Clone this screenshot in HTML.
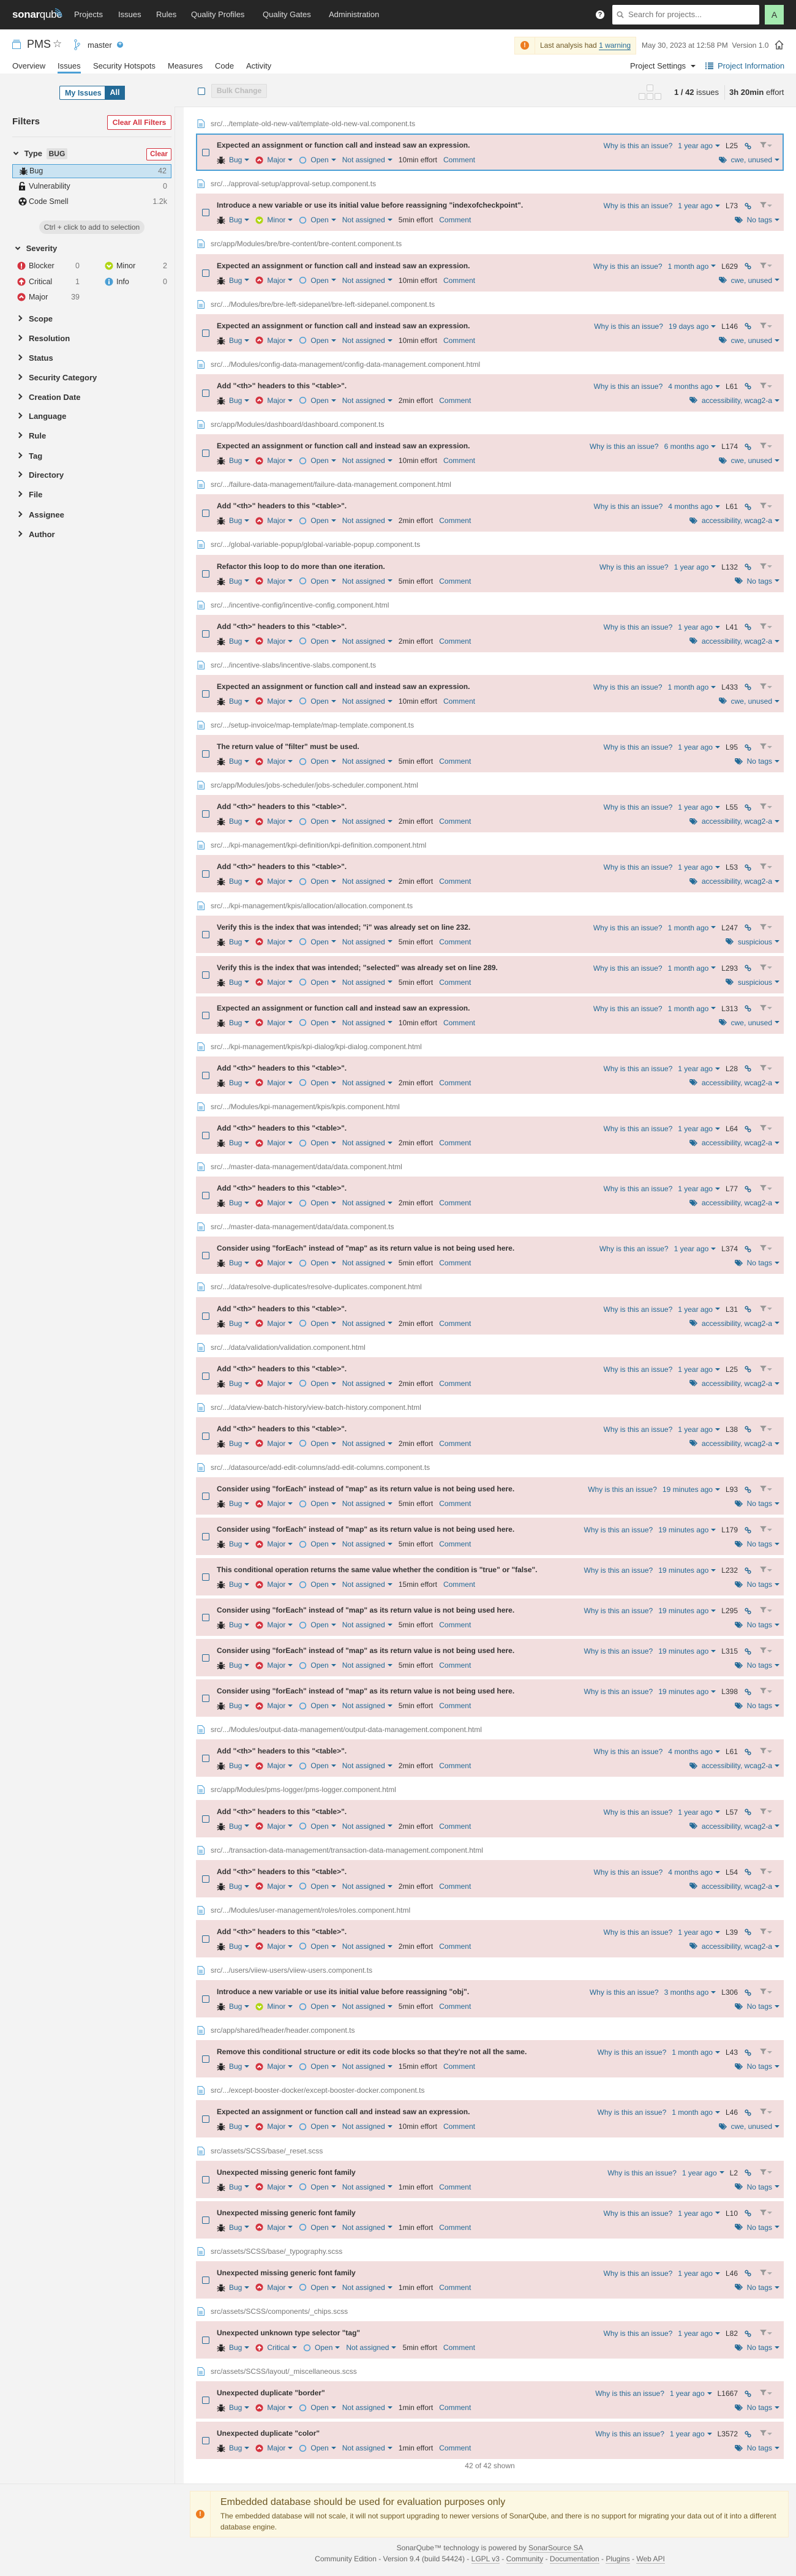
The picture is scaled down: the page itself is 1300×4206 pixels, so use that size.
<!DOCTYPE html>
<html><head><meta charset="utf-8">
<style>
*{box-sizing:border-box}
body{margin:0;width:1300px;height:4206px;position:relative;font-family:"Liberation Sans",Arial,sans-serif;font-size:12px;color:#333;background:#f3f3f3;overflow:hidden}
a{color:#236a97;text-decoration:none}
.abs{position:absolute}
.top{left:0;top:0;width:1300px;height:48px;background:#262626}
.nav a{position:absolute;top:16px;color:#ddd;font-size:13px}
.pbar{left:0;top:48px;width:1300px;height:72px;background:#fff}
.main-w{left:300px;top:175px;width:1000px;height:3880px;background:#fff}
.tbar{left:285px;top:120px;width:1015px;height:55px;background:#f3f3f3;border-bottom:1px solid #e6e6e6}
.side{left:0;top:120px;width:286px;height:3935px;border-right:1px solid #e6e6e6;background:#f3f3f3}
.sh{position:absolute;left:28px;font-weight:bold;font-size:13px;color:#333}
.sh:before{content:"";display:inline-block;width:5px;height:5px;border-right:2px solid #333;border-top:2px solid #333;transform:rotate(45deg);margin-right:12px;position:relative;top:-2px}
.fr{position:absolute;left:20px;width:260px;height:23px;line-height:23px;font-size:12.5px;padding-left:27px}
.fr svg{position:absolute;left:10px;top:4px}
.fr .n{position:absolute;right:7px;color:#777}
.sv{position:absolute;height:20px;line-height:20px;font-size:12.5px;padding-left:27px}
.sv svg{position:absolute;left:8px;top:3px}
.sv .n{position:absolute;right:0;color:#777}
#list{position:absolute;left:320px;top:186px;width:960px}
.fh{height:32.2px;display:flex;align-items:center;color:#777;font-size:12px;padding-left:2px}
.fh svg{margin-right:10px}
.c{height:61px;margin-bottom:5px;background:#f2dede;position:relative}
.c.sel{border:2px solid #4b9fd5}
.cb{position:absolute;left:10px;top:25px;width:12px;height:12px;border:1px solid #236a97;border-radius:2px}
.sel .cb{left:8px;top:23px}
.t{position:absolute;left:34px;top:11px;font-weight:bold;font-size:12px;line-height:16px;white-space:nowrap}
.sel .t{left:32px;top:9px}
.m{position:absolute;left:34px;top:35px;line-height:16px;white-space:nowrap;display:flex;align-items:center}
.sel .m{left:32px;top:33px}
.m svg{margin-right:6px}
.m a,.m span{margin-right:10px}
u{display:inline-block;width:0;height:0;border-left:4px solid transparent;border-right:4px solid transparent;border-top:4px solid #236a97;margin-left:4px;vertical-align:middle;position:relative;top:-1px}
.r1{position:absolute;right:8px;top:12px;line-height:16px;display:flex;align-items:center;white-space:nowrap}
.r2{position:absolute;right:7px;top:35px;line-height:16px;display:flex;align-items:center;white-space:nowrap}
.sel .r1{right:6px;top:10px}.sel .r2{right:5px;top:33px}
.r1 a{margin-right:9px}.r1 span{margin-right:11px}
.r1 .lk{margin-right:14px}
.r2 svg{margin-right:5px}
.fl u{border-top-color:#aaa;margin-left:1px}
</style></head><body>
<svg width="0" height="0" style="position:absolute">
<defs>
<symbol id="bug" viewBox="0 0 14 14"><path d="M5 1.5l1 1.5h2l1-1.5" stroke="#222" fill="none" stroke-width="1.2"/><rect x="4.5" y="3" width="5" height="2.5" fill="#222"/><path d="M4 6h6v4.5a3 3 0 0 1-6 0z" fill="#222"/><path d="M1 5.5l3 1.5M13 5.5l-3 1.5M0.5 9h3.5M13.5 9h-3.5M1 13l3-2M13 13l-3-2" stroke="#222" stroke-width="1.3"/></symbol>
<symbol id="maj" viewBox="0 0 14 14"><circle cx="7" cy="7" r="6.5" fill="#d4333f"/><path d="M3.8 8.6L7 5.4l3.2 3.2" stroke="#fff" stroke-width="2.2" fill="none"/></symbol>
<symbol id="min" viewBox="0 0 14 14"><circle cx="7" cy="7" r="6.5" fill="#b0d513"/><path d="M3.8 5.6L7 8.8l3.2-3.2" stroke="#fff" stroke-width="2.2" fill="none"/></symbol>
<symbol id="crit" viewBox="0 0 14 14"><circle cx="7" cy="7" r="6.5" fill="#d4333f"/><path d="M7 11.5V4.5M3.8 7.6L7 4.4l3.2 3.2" stroke="#fff" stroke-width="2.2" fill="none"/></symbol>
<symbol id="blk" viewBox="0 0 14 14"><circle cx="7" cy="7" r="6.5" fill="#d4333f"/><rect x="6" y="3" width="2" height="5.5" fill="#fff"/><rect x="6" y="9.5" width="2" height="2" fill="#fff"/></symbol>
<symbol id="inf" viewBox="0 0 14 14"><circle cx="7" cy="7" r="6.5" fill="#4b9fd5"/><rect x="6" y="6" width="2" height="5" fill="#fff"/><rect x="6" y="3" width="2" height="2" fill="#fff"/></symbol>
<symbol id="open" viewBox="0 0 14 14"><circle cx="7" cy="7" r="5.3" fill="none" stroke="#4b9fd5" stroke-width="1.6"/></symbol>
<symbol id="lnk" viewBox="0 0 12 12"><circle cx="3.6" cy="3.6" r="2.4" fill="none" stroke="#236a97" stroke-width="1.6"/><circle cx="8.4" cy="8.4" r="2.4" fill="none" stroke="#236a97" stroke-width="1.6"/><path d="M5 5l2 2" stroke="#236a97" stroke-width="1.6"/></symbol>
<symbol id="flt" viewBox="0 0 12 12"><path d="M0 1h12L7.5 6v5L4.5 9.5V6z" fill="#999"/></symbol>
<symbol id="tag" viewBox="0 0 16 12"><path d="M0 1v4l6 6 5-5-6-6H1z" fill="#236a97"/><circle cx="2.5" cy="2.5" r="1" fill="#f2dede"/><path d="M7 0l6 6-5 5" stroke="#236a97" stroke-width="1.5" fill="none"/></symbol>
<symbol id="file" viewBox="0 0 12 14"><path d="M1 .5h7l3.5 3.5v9.5H1z" fill="none" stroke="#4b9fd5"/><path d="M3 7h6M3 9h6M3 11h6" stroke="#4b9fd5"/></symbol>
</defs></svg>

<div class="abs top"></div>
<div class="abs" style="left:20px;top:14px;color:#fff;font-size:17px;letter-spacing:-0.3px"><b>sonar</b>qube</div>
<svg class="abs" style="left:88px;top:12px" width="16" height="22" viewBox="0 0 16 22"><path d="M2 2c6 1 10 6 11 13M2 5c5 1 8 5 8.5 10M2 8c3 1 5.5 3.5 6 7" stroke="#4b9fd5" fill="none" stroke-width="1.3"/></svg>
<div class="nav"><a style="left:121px">Projects</a><a style="left:193px">Issues</a><a style="left:255px">Rules</a><a style="left:312px">Quality Profiles</a><a style="left:429px">Quality Gates</a><a style="left:537px">Administration</a></div>
<div class="abs" style="left:973px;top:17px;width:14px;height:14px;border-radius:7px;background:#fff;color:#262626;font-weight:bold;font-size:11px;text-align:center;line-height:14px">?</div>
<div class="abs" style="left:1000px;top:8px;width:240px;height:32px;background:#fff;border-radius:2px;color:#777;font-size:13px;line-height:32px;padding-left:26px">Search for projects...</div>
<svg class="abs" style="left:1007px;top:18px" width="12" height="12"><circle cx="5" cy="5" r="3.8" stroke="#888" stroke-width="1.5" fill="none"/><path d="M8 8l3 3" stroke="#888" stroke-width="1.8"/></svg>
<div class="abs" style="left:1249px;top:8px;width:31px;height:32px;background:#a5eab0;color:#333;font-size:14px;text-align:center;line-height:32px">A</div>

<div class="abs pbar"></div>
<svg class="abs" style="left:20px;top:65px" width="14" height="15"><rect x="0.5" y="4.5" width="13" height="10" fill="none" stroke="#4b9fd5"/><path d="M1 2.5h12M2 .5h10" stroke="#4b9fd5"/></svg>
<div class="abs" style="left:44px;top:62px;font-size:18px;color:#333">PMS</div>
<div class="abs" style="left:86px;top:62px;font-size:17px;color:#555">☆</div>
<svg class="abs" style="left:121px;top:64px" width="10" height="18"><circle cx="2.5" cy="2.5" r="1.8" fill="none" stroke="#4b9fd5"/><circle cx="2.5" cy="15.5" r="1.8" fill="none" stroke="#4b9fd5"/><circle cx="7.5" cy="8" r="1.8" fill="none" stroke="#4b9fd5"/><path d="M2.5 4.5v9M7.5 10c0 3-5 2-5 4" stroke="#4b9fd5" fill="none"/></svg>
<div class="abs" style="left:143px;top:66px;font-size:13px;color:#333">master</div>
<div class="abs" style="left:191px;top:68px;width:10px;height:10px;border-radius:5px;background:#4b9fd5;color:#fff;font-size:10px;line-height:10px;text-align:center;font-weight:bold">+</div>
<div class="abs" style="left:840px;top:60px;width:199px;height:29px;background:#fcf8e3;border:1px solid #faebcc"></div>
<div class="abs" style="left:873px;top:61px;width:1px;height:27px;background:#faebcc"></div>
<div class="abs" style="left:850px;top:67px;width:14px;height:14px;border-radius:7px;background:#ed7d20;color:#fff;font-weight:bold;font-size:11px;text-align:center;line-height:14px">!</div>
<div class="abs" style="left:882px;top:67px;font-size:12px;color:#6d5723">Last analysis had <a style="color:#236a97;border-bottom:1px solid #236a97">1 warning</a></div>
<div class="abs" style="left:1048px;top:67px;font-size:12px;color:#666">May 30, 2023 at 12:58 PM&nbsp; Version 1.0</div>
<svg class="abs" style="left:1265px;top:65px" width="15" height="16"><path d="M1 8L7.5 1.5 14 8M3 6.5V15h3.5v-4h2v4H12V6.5" fill="none" stroke="#444" stroke-width="1.3"/></svg>
<div class="abs" style="top:100px;left:20px;font-size:13px;color:#333">Overview</div>
<div class="abs" style="top:100px;left:94px;font-size:13px;color:#333">Issues</div>
<div class="abs" style="top:117px;left:94px;width:38px;height:3px;background:#4b9fd5"></div>
<div class="abs" style="top:100px;left:152px;font-size:13px;color:#333">Security Hotspots</div>
<div class="abs" style="top:100px;left:274px;font-size:13px;color:#333">Measures</div>
<div class="abs" style="top:100px;left:351px;font-size:13px;color:#333">Code</div>
<div class="abs" style="top:100px;left:402px;font-size:13px;color:#333">Activity</div>
<div class="abs" style="top:100px;left:1029px;font-size:13px;color:#333">Project Settings <u style="border-top-color:#333"></u></div>
<svg class="abs" style="left:1152px;top:102px" width="13" height="11"><path d="M0 1h2M4 1h9M0 4h2M4 4h9M0 7h2M4 7h9M0 10h2M4 10h9" stroke="#236a97" stroke-width="1.8"/></svg>
<div class="abs" style="top:100px;left:1172px;font-size:13px;color:#236a97">Project Information</div>

<div class="abs side"></div>
<div class="abs tbar"></div>
<div class="abs main-w"></div>

<div class="abs" style="left:97px;top:140px;width:107px;height:23px;border:1px solid #236a97;border-radius:2px;background:#fff"></div>
<div class="abs" style="left:106px;top:145px;font-weight:bold;color:#236a97;font-size:12.5px">My Issues</div>
<div class="abs" style="left:171px;top:140px;width:33px;height:23px;background:#236a97;color:#fff;font-weight:bold;font-size:12.5px;line-height:23px;text-align:center">All</div>
<div class="abs" style="left:20px;top:190px;font-weight:bold;font-size:15px">Filters</div>
<div class="abs" style="left:175px;top:188px;width:105px;height:24px;border:1px solid #d4333f;border-radius:2px;color:#d4333f;font-weight:bold;font-size:12px;line-height:22px;text-align:center;background:#fff">Clear All Filters</div>
<div class="abs" style="left:20px;top:223px;width:260px;height:1px;background:#e1e1e1"></div>
<div class="abs" style="left:20px;top:243px;font-weight:bold;font-size:13px"><span style="display:inline-block;width:6px;height:6px;border-right:2px solid #333;border-bottom:2px solid #333;transform:rotate(45deg);margin-right:10px;position:relative;top:-3px;left:3px"></span> Type <span style="background:#e1e1e1;padding:2px 4px;border-radius:2px;font-size:12px;margin-left:3px">BUG</span></div>
<div class="abs" style="left:239px;top:242px;width:41px;height:20px;border:1px solid #d4333f;border-radius:2px;color:#d4333f;font-weight:bold;font-size:11.5px;line-height:18px;text-align:center;background:#fff">Clear</div>
<div class="fr" style="top:268px;background:#cae3f2;border:1px solid #4b9fd5;line-height:21px"><svg width="15" height="14" style="top:3px"><use href="#bug"/></svg>Bug<span class="n">42</span></div>
<div class="fr" style="top:293px"><svg width="12" height="14"><rect x="1" y="6" width="10" height="8" fill="#222"/><path d="M3 6V3.5a3 3 0 0 1 6 0" fill="none" stroke="#222" stroke-width="1.8"/><rect x="5" y="8.5" width="2" height="3" fill="#fff"/></svg>Vulnerability<span class="n">0</span></div>
<div class="fr" style="top:318px"><svg width="14" height="14"><circle cx="7" cy="7" r="6.5" fill="#222"/><circle cx="4.3" cy="5.5" r="1.8" fill="#fff"/><circle cx="9.7" cy="5.5" r="1.8" fill="#fff"/><circle cx="7" cy="10.5" r="1.8" fill="#fff"/></svg>Code Smell<span class="n">1.2k</span></div>
<div class="abs" style="left:64px;top:360px;width:172px;height:22px;border-radius:11px;background:#e4e4e4;color:#555;font-size:12px;line-height:22px;text-align:center">Ctrl + click to add to selection</div>
<div class="abs" style="left:23px;top:398px;font-weight:bold;font-size:13px"><span style="display:inline-block;width:6px;height:6px;border-right:2px solid #333;border-bottom:2px solid #333;transform:rotate(45deg);margin-right:10px;position:relative;top:-3px;left:3px"></span> Severity</div>
<div class="sv" style="left:20px;top:424px;width:110px"><svg width="14" height="14"><use href="#blk"/></svg>Blocker<span class="n">0</span></div>
<div class="sv" style="left:20px;top:450px;width:110px"><svg width="14" height="14"><use href="#crit"/></svg>Critical<span class="n">1</span></div>
<div class="sv" style="left:20px;top:475px;width:110px"><svg width="14" height="14"><use href="#maj"/></svg>Major<span class="n">39</span></div>
<div class="sv" style="left:163px;top:424px;width:110px"><svg width="14" height="14"><use href="#min"/></svg>Minor<span class="n">2</span></div>
<div class="sv" style="left:163px;top:450px;width:110px"><svg width="14" height="14"><use href="#inf"/></svg>Info<span class="n">0</span></div>
<div class="sh" style="top:513px">Scope</div>
<div class="sh" style="top:545px">Resolution</div>
<div class="sh" style="top:577px">Status</div>
<div class="sh" style="top:609px">Security Category</div>
<div class="sh" style="top:641px">Creation Date</div>
<div class="sh" style="top:672px">Language</div>
<div class="sh" style="top:704px">Rule</div>
<div class="sh" style="top:737px">Tag</div>
<div class="sh" style="top:768px">Directory</div>
<div class="sh" style="top:800px">File</div>
<div class="sh" style="top:833px">Assignee</div>
<div class="sh" style="top:865px">Author</div>

<div class="abs" style="left:323px;top:143px;width:12px;height:12px;border:1px solid #236a97;border-radius:2px;background:#fff"></div>
<div class="abs" style="left:345px;top:137px;width:91px;height:23px;border:1px solid #ddd;border-radius:2px;background:#ebebeb;color:#bbb;font-weight:bold;font-size:12px;line-height:21px;text-align:center">Bulk Change</div>
<div class="abs" style="left:1056px;top:138px;width:11px;height:11px;border:1px solid #ccc;border-radius:2px;background:#f8f8f8"></div>
<div class="abs" style="left:1043px;top:152px;width:11px;height:11px;border:1px solid #ccc;border-radius:2px;background:#f8f8f8"></div>
<div class="abs" style="left:1056px;top:152px;width:11px;height:11px;border:1px solid #ccc;border-radius:2px;background:#f8f8f8"></div>
<div class="abs" style="left:1069px;top:152px;width:11px;height:11px;border:1px solid #ccc;border-radius:2px;background:#f8f8f8"></div>
<div class="abs" style="left:1101px;top:143px;font-size:13px"><b>1 / 42</b> issues</div>
<div class="abs" style="left:1183px;top:139px;width:1px;height:24px;background:#ddd"></div>
<div class="abs" style="left:1191px;top:143px;font-size:13px"><b>3h 20min</b> effort</div>

<div id="list">
<div class="fh"><svg width="12" height="14"><use href="#file"/></svg>src/.../template-old-new-val/template-old-new-val.component.ts</div>
<div class="c sel"><i class="cb"></i><div class="t">Expected an assignment or function call and instead saw an expression.</div><div class="m"><svg width="14" height="14"><use href="#bug"/></svg><a>Bug<u></u></a><svg width="13" height="13"><use href="#maj"/></svg><a>Major<u></u></a><svg width="13" height="13"><use href="#open"/></svg><a>Open<u></u></a><a>Not assigned<u></u></a><span>10min effort</span><a>Comment</a></div><div class="r1"><a>Why is this an issue?</a><a>1 year ago<u></u></a><span>L25</span><svg class="lk" width="11" height="11"><use href="#lnk"/></svg><span class="fl"><svg width="11" height="11"><use href="#flt"/></svg><u></u></span></div><div class="r2"><svg width="15" height="11"><use href="#tag"/></svg><a>cwe, unused<u></u></a></div></div>

<div class="fh"><svg width="12" height="14"><use href="#file"/></svg>src/.../approval-setup/approval-setup.component.ts</div>
<div class="c"><i class="cb"></i><div class="t">Introduce a new variable or use its initial value before reassigning "indexofcheckpoint".</div><div class="m"><svg width="14" height="14"><use href="#bug"/></svg><a>Bug<u></u></a><svg width="13" height="13"><use href="#min"/></svg><a>Minor<u></u></a><svg width="13" height="13"><use href="#open"/></svg><a>Open<u></u></a><a>Not assigned<u></u></a><span>5min effort</span><a>Comment</a></div><div class="r1"><a>Why is this an issue?</a><a>1 year ago<u></u></a><span>L73</span><svg class="lk" width="11" height="11"><use href="#lnk"/></svg><span class="fl"><svg width="11" height="11"><use href="#flt"/></svg><u></u></span></div><div class="r2"><svg width="15" height="11"><use href="#tag"/></svg><a>No tags<u></u></a></div></div>

<div class="fh"><svg width="12" height="14"><use href="#file"/></svg>src/app/Modules/bre/bre-content/bre-content.component.ts</div>
<div class="c"><i class="cb"></i><div class="t">Expected an assignment or function call and instead saw an expression.</div><div class="m"><svg width="14" height="14"><use href="#bug"/></svg><a>Bug<u></u></a><svg width="13" height="13"><use href="#maj"/></svg><a>Major<u></u></a><svg width="13" height="13"><use href="#open"/></svg><a>Open<u></u></a><a>Not assigned<u></u></a><span>10min effort</span><a>Comment</a></div><div class="r1"><a>Why is this an issue?</a><a>1 month ago<u></u></a><span>L629</span><svg class="lk" width="11" height="11"><use href="#lnk"/></svg><span class="fl"><svg width="11" height="11"><use href="#flt"/></svg><u></u></span></div><div class="r2"><svg width="15" height="11"><use href="#tag"/></svg><a>cwe, unused<u></u></a></div></div>

<div class="fh"><svg width="12" height="14"><use href="#file"/></svg>src/.../Modules/bre/bre-left-sidepanel/bre-left-sidepanel.component.ts</div>
<div class="c"><i class="cb"></i><div class="t">Expected an assignment or function call and instead saw an expression.</div><div class="m"><svg width="14" height="14"><use href="#bug"/></svg><a>Bug<u></u></a><svg width="13" height="13"><use href="#maj"/></svg><a>Major<u></u></a><svg width="13" height="13"><use href="#open"/></svg><a>Open<u></u></a><a>Not assigned<u></u></a><span>10min effort</span><a>Comment</a></div><div class="r1"><a>Why is this an issue?</a><a>19 days ago<u></u></a><span>L146</span><svg class="lk" width="11" height="11"><use href="#lnk"/></svg><span class="fl"><svg width="11" height="11"><use href="#flt"/></svg><u></u></span></div><div class="r2"><svg width="15" height="11"><use href="#tag"/></svg><a>cwe, unused<u></u></a></div></div>

<div class="fh"><svg width="12" height="14"><use href="#file"/></svg>src/.../Modules/config-data-management/config-data-management.component.html</div>
<div class="c"><i class="cb"></i><div class="t">Add "&lt;th&gt;" headers to this "&lt;table&gt;".</div><div class="m"><svg width="14" height="14"><use href="#bug"/></svg><a>Bug<u></u></a><svg width="13" height="13"><use href="#maj"/></svg><a>Major<u></u></a><svg width="13" height="13"><use href="#open"/></svg><a>Open<u></u></a><a>Not assigned<u></u></a><span>2min effort</span><a>Comment</a></div><div class="r1"><a>Why is this an issue?</a><a>4 months ago<u></u></a><span>L61</span><svg class="lk" width="11" height="11"><use href="#lnk"/></svg><span class="fl"><svg width="11" height="11"><use href="#flt"/></svg><u></u></span></div><div class="r2"><svg width="15" height="11"><use href="#tag"/></svg><a>accessibility, wcag2-a<u></u></a></div></div>

<div class="fh"><svg width="12" height="14"><use href="#file"/></svg>src/app/Modules/dashboard/dashboard.component.ts</div>
<div class="c"><i class="cb"></i><div class="t">Expected an assignment or function call and instead saw an expression.</div><div class="m"><svg width="14" height="14"><use href="#bug"/></svg><a>Bug<u></u></a><svg width="13" height="13"><use href="#maj"/></svg><a>Major<u></u></a><svg width="13" height="13"><use href="#open"/></svg><a>Open<u></u></a><a>Not assigned<u></u></a><span>10min effort</span><a>Comment</a></div><div class="r1"><a>Why is this an issue?</a><a>6 months ago<u></u></a><span>L174</span><svg class="lk" width="11" height="11"><use href="#lnk"/></svg><span class="fl"><svg width="11" height="11"><use href="#flt"/></svg><u></u></span></div><div class="r2"><svg width="15" height="11"><use href="#tag"/></svg><a>cwe, unused<u></u></a></div></div>

<div class="fh"><svg width="12" height="14"><use href="#file"/></svg>src/.../failure-data-management/failure-data-management.component.html</div>
<div class="c"><i class="cb"></i><div class="t">Add "&lt;th&gt;" headers to this "&lt;table&gt;".</div><div class="m"><svg width="14" height="14"><use href="#bug"/></svg><a>Bug<u></u></a><svg width="13" height="13"><use href="#maj"/></svg><a>Major<u></u></a><svg width="13" height="13"><use href="#open"/></svg><a>Open<u></u></a><a>Not assigned<u></u></a><span>2min effort</span><a>Comment</a></div><div class="r1"><a>Why is this an issue?</a><a>4 months ago<u></u></a><span>L61</span><svg class="lk" width="11" height="11"><use href="#lnk"/></svg><span class="fl"><svg width="11" height="11"><use href="#flt"/></svg><u></u></span></div><div class="r2"><svg width="15" height="11"><use href="#tag"/></svg><a>accessibility, wcag2-a<u></u></a></div></div>

<div class="fh"><svg width="12" height="14"><use href="#file"/></svg>src/.../global-variable-popup/global-variable-popup.component.ts</div>
<div class="c"><i class="cb"></i><div class="t">Refactor this loop to do more than one iteration.</div><div class="m"><svg width="14" height="14"><use href="#bug"/></svg><a>Bug<u></u></a><svg width="13" height="13"><use href="#maj"/></svg><a>Major<u></u></a><svg width="13" height="13"><use href="#open"/></svg><a>Open<u></u></a><a>Not assigned<u></u></a><span>5min effort</span><a>Comment</a></div><div class="r1"><a>Why is this an issue?</a><a>1 year ago<u></u></a><span>L132</span><svg class="lk" width="11" height="11"><use href="#lnk"/></svg><span class="fl"><svg width="11" height="11"><use href="#flt"/></svg><u></u></span></div><div class="r2"><svg width="15" height="11"><use href="#tag"/></svg><a>No tags<u></u></a></div></div>

<div class="fh"><svg width="12" height="14"><use href="#file"/></svg>src/.../incentive-config/incentive-config.component.html</div>
<div class="c"><i class="cb"></i><div class="t">Add "&lt;th&gt;" headers to this "&lt;table&gt;".</div><div class="m"><svg width="14" height="14"><use href="#bug"/></svg><a>Bug<u></u></a><svg width="13" height="13"><use href="#maj"/></svg><a>Major<u></u></a><svg width="13" height="13"><use href="#open"/></svg><a>Open<u></u></a><a>Not assigned<u></u></a><span>2min effort</span><a>Comment</a></div><div class="r1"><a>Why is this an issue?</a><a>1 year ago<u></u></a><span>L41</span><svg class="lk" width="11" height="11"><use href="#lnk"/></svg><span class="fl"><svg width="11" height="11"><use href="#flt"/></svg><u></u></span></div><div class="r2"><svg width="15" height="11"><use href="#tag"/></svg><a>accessibility, wcag2-a<u></u></a></div></div>

<div class="fh"><svg width="12" height="14"><use href="#file"/></svg>src/.../incentive-slabs/incentive-slabs.component.ts</div>
<div class="c"><i class="cb"></i><div class="t">Expected an assignment or function call and instead saw an expression.</div><div class="m"><svg width="14" height="14"><use href="#bug"/></svg><a>Bug<u></u></a><svg width="13" height="13"><use href="#maj"/></svg><a>Major<u></u></a><svg width="13" height="13"><use href="#open"/></svg><a>Open<u></u></a><a>Not assigned<u></u></a><span>10min effort</span><a>Comment</a></div><div class="r1"><a>Why is this an issue?</a><a>1 month ago<u></u></a><span>L433</span><svg class="lk" width="11" height="11"><use href="#lnk"/></svg><span class="fl"><svg width="11" height="11"><use href="#flt"/></svg><u></u></span></div><div class="r2"><svg width="15" height="11"><use href="#tag"/></svg><a>cwe, unused<u></u></a></div></div>

<div class="fh"><svg width="12" height="14"><use href="#file"/></svg>src/.../setup-invoice/map-template/map-template.component.ts</div>
<div class="c"><i class="cb"></i><div class="t">The return value of "filter" must be used.</div><div class="m"><svg width="14" height="14"><use href="#bug"/></svg><a>Bug<u></u></a><svg width="13" height="13"><use href="#maj"/></svg><a>Major<u></u></a><svg width="13" height="13"><use href="#open"/></svg><a>Open<u></u></a><a>Not assigned<u></u></a><span>5min effort</span><a>Comment</a></div><div class="r1"><a>Why is this an issue?</a><a>1 year ago<u></u></a><span>L95</span><svg class="lk" width="11" height="11"><use href="#lnk"/></svg><span class="fl"><svg width="11" height="11"><use href="#flt"/></svg><u></u></span></div><div class="r2"><svg width="15" height="11"><use href="#tag"/></svg><a>No tags<u></u></a></div></div>

<div class="fh"><svg width="12" height="14"><use href="#file"/></svg>src/app/Modules/jobs-scheduler/jobs-scheduler.component.html</div>
<div class="c"><i class="cb"></i><div class="t">Add "&lt;th&gt;" headers to this "&lt;table&gt;".</div><div class="m"><svg width="14" height="14"><use href="#bug"/></svg><a>Bug<u></u></a><svg width="13" height="13"><use href="#maj"/></svg><a>Major<u></u></a><svg width="13" height="13"><use href="#open"/></svg><a>Open<u></u></a><a>Not assigned<u></u></a><span>2min effort</span><a>Comment</a></div><div class="r1"><a>Why is this an issue?</a><a>1 year ago<u></u></a><span>L55</span><svg class="lk" width="11" height="11"><use href="#lnk"/></svg><span class="fl"><svg width="11" height="11"><use href="#flt"/></svg><u></u></span></div><div class="r2"><svg width="15" height="11"><use href="#tag"/></svg><a>accessibility, wcag2-a<u></u></a></div></div>

<div class="fh"><svg width="12" height="14"><use href="#file"/></svg>src/.../kpi-management/kpi-definition/kpi-definition.component.html</div>
<div class="c"><i class="cb"></i><div class="t">Add "&lt;th&gt;" headers to this "&lt;table&gt;".</div><div class="m"><svg width="14" height="14"><use href="#bug"/></svg><a>Bug<u></u></a><svg width="13" height="13"><use href="#maj"/></svg><a>Major<u></u></a><svg width="13" height="13"><use href="#open"/></svg><a>Open<u></u></a><a>Not assigned<u></u></a><span>2min effort</span><a>Comment</a></div><div class="r1"><a>Why is this an issue?</a><a>1 year ago<u></u></a><span>L53</span><svg class="lk" width="11" height="11"><use href="#lnk"/></svg><span class="fl"><svg width="11" height="11"><use href="#flt"/></svg><u></u></span></div><div class="r2"><svg width="15" height="11"><use href="#tag"/></svg><a>accessibility, wcag2-a<u></u></a></div></div>

<div class="fh"><svg width="12" height="14"><use href="#file"/></svg>src/.../kpi-management/kpis/allocation/allocation.component.ts</div>
<div class="c"><i class="cb"></i><div class="t">Verify this is the index that was intended; "i" was already set on line 232.</div><div class="m"><svg width="14" height="14"><use href="#bug"/></svg><a>Bug<u></u></a><svg width="13" height="13"><use href="#maj"/></svg><a>Major<u></u></a><svg width="13" height="13"><use href="#open"/></svg><a>Open<u></u></a><a>Not assigned<u></u></a><span>5min effort</span><a>Comment</a></div><div class="r1"><a>Why is this an issue?</a><a>1 month ago<u></u></a><span>L247</span><svg class="lk" width="11" height="11"><use href="#lnk"/></svg><span class="fl"><svg width="11" height="11"><use href="#flt"/></svg><u></u></span></div><div class="r2"><svg width="15" height="11"><use href="#tag"/></svg><a>suspicious<u></u></a></div></div>
<div class="c"><i class="cb"></i><div class="t">Verify this is the index that was intended; "selected" was already set on line 289.</div><div class="m"><svg width="14" height="14"><use href="#bug"/></svg><a>Bug<u></u></a><svg width="13" height="13"><use href="#maj"/></svg><a>Major<u></u></a><svg width="13" height="13"><use href="#open"/></svg><a>Open<u></u></a><a>Not assigned<u></u></a><span>5min effort</span><a>Comment</a></div><div class="r1"><a>Why is this an issue?</a><a>1 month ago<u></u></a><span>L293</span><svg class="lk" width="11" height="11"><use href="#lnk"/></svg><span class="fl"><svg width="11" height="11"><use href="#flt"/></svg><u></u></span></div><div class="r2"><svg width="15" height="11"><use href="#tag"/></svg><a>suspicious<u></u></a></div></div>
<div class="c"><i class="cb"></i><div class="t">Expected an assignment or function call and instead saw an expression.</div><div class="m"><svg width="14" height="14"><use href="#bug"/></svg><a>Bug<u></u></a><svg width="13" height="13"><use href="#maj"/></svg><a>Major<u></u></a><svg width="13" height="13"><use href="#open"/></svg><a>Open<u></u></a><a>Not assigned<u></u></a><span>10min effort</span><a>Comment</a></div><div class="r1"><a>Why is this an issue?</a><a>1 month ago<u></u></a><span>L313</span><svg class="lk" width="11" height="11"><use href="#lnk"/></svg><span class="fl"><svg width="11" height="11"><use href="#flt"/></svg><u></u></span></div><div class="r2"><svg width="15" height="11"><use href="#tag"/></svg><a>cwe, unused<u></u></a></div></div>

<div class="fh"><svg width="12" height="14"><use href="#file"/></svg>src/.../kpi-management/kpis/kpi-dialog/kpi-dialog.component.html</div>
<div class="c"><i class="cb"></i><div class="t">Add "&lt;th&gt;" headers to this "&lt;table&gt;".</div><div class="m"><svg width="14" height="14"><use href="#bug"/></svg><a>Bug<u></u></a><svg width="13" height="13"><use href="#maj"/></svg><a>Major<u></u></a><svg width="13" height="13"><use href="#open"/></svg><a>Open<u></u></a><a>Not assigned<u></u></a><span>2min effort</span><a>Comment</a></div><div class="r1"><a>Why is this an issue?</a><a>1 year ago<u></u></a><span>L28</span><svg class="lk" width="11" height="11"><use href="#lnk"/></svg><span class="fl"><svg width="11" height="11"><use href="#flt"/></svg><u></u></span></div><div class="r2"><svg width="15" height="11"><use href="#tag"/></svg><a>accessibility, wcag2-a<u></u></a></div></div>

<div class="fh"><svg width="12" height="14"><use href="#file"/></svg>src/.../Modules/kpi-management/kpis/kpis.component.html</div>
<div class="c"><i class="cb"></i><div class="t">Add "&lt;th&gt;" headers to this "&lt;table&gt;".</div><div class="m"><svg width="14" height="14"><use href="#bug"/></svg><a>Bug<u></u></a><svg width="13" height="13"><use href="#maj"/></svg><a>Major<u></u></a><svg width="13" height="13"><use href="#open"/></svg><a>Open<u></u></a><a>Not assigned<u></u></a><span>2min effort</span><a>Comment</a></div><div class="r1"><a>Why is this an issue?</a><a>1 year ago<u></u></a><span>L64</span><svg class="lk" width="11" height="11"><use href="#lnk"/></svg><span class="fl"><svg width="11" height="11"><use href="#flt"/></svg><u></u></span></div><div class="r2"><svg width="15" height="11"><use href="#tag"/></svg><a>accessibility, wcag2-a<u></u></a></div></div>

<div class="fh"><svg width="12" height="14"><use href="#file"/></svg>src/.../master-data-management/data/data.component.html</div>
<div class="c"><i class="cb"></i><div class="t">Add "&lt;th&gt;" headers to this "&lt;table&gt;".</div><div class="m"><svg width="14" height="14"><use href="#bug"/></svg><a>Bug<u></u></a><svg width="13" height="13"><use href="#maj"/></svg><a>Major<u></u></a><svg width="13" height="13"><use href="#open"/></svg><a>Open<u></u></a><a>Not assigned<u></u></a><span>2min effort</span><a>Comment</a></div><div class="r1"><a>Why is this an issue?</a><a>1 year ago<u></u></a><span>L77</span><svg class="lk" width="11" height="11"><use href="#lnk"/></svg><span class="fl"><svg width="11" height="11"><use href="#flt"/></svg><u></u></span></div><div class="r2"><svg width="15" height="11"><use href="#tag"/></svg><a>accessibility, wcag2-a<u></u></a></div></div>

<div class="fh"><svg width="12" height="14"><use href="#file"/></svg>src/.../master-data-management/data/data.component.ts</div>
<div class="c"><i class="cb"></i><div class="t">Consider using "forEach" instead of "map" as its return value is not being used here.</div><div class="m"><svg width="14" height="14"><use href="#bug"/></svg><a>Bug<u></u></a><svg width="13" height="13"><use href="#maj"/></svg><a>Major<u></u></a><svg width="13" height="13"><use href="#open"/></svg><a>Open<u></u></a><a>Not assigned<u></u></a><span>5min effort</span><a>Comment</a></div><div class="r1"><a>Why is this an issue?</a><a>1 year ago<u></u></a><span>L374</span><svg class="lk" width="11" height="11"><use href="#lnk"/></svg><span class="fl"><svg width="11" height="11"><use href="#flt"/></svg><u></u></span></div><div class="r2"><svg width="15" height="11"><use href="#tag"/></svg><a>No tags<u></u></a></div></div>

<div class="fh"><svg width="12" height="14"><use href="#file"/></svg>src/.../data/resolve-duplicates/resolve-duplicates.component.html</div>
<div class="c"><i class="cb"></i><div class="t">Add "&lt;th&gt;" headers to this "&lt;table&gt;".</div><div class="m"><svg width="14" height="14"><use href="#bug"/></svg><a>Bug<u></u></a><svg width="13" height="13"><use href="#maj"/></svg><a>Major<u></u></a><svg width="13" height="13"><use href="#open"/></svg><a>Open<u></u></a><a>Not assigned<u></u></a><span>2min effort</span><a>Comment</a></div><div class="r1"><a>Why is this an issue?</a><a>1 year ago<u></u></a><span>L31</span><svg class="lk" width="11" height="11"><use href="#lnk"/></svg><span class="fl"><svg width="11" height="11"><use href="#flt"/></svg><u></u></span></div><div class="r2"><svg width="15" height="11"><use href="#tag"/></svg><a>accessibility, wcag2-a<u></u></a></div></div>

<div class="fh"><svg width="12" height="14"><use href="#file"/></svg>src/.../data/validation/validation.component.html</div>
<div class="c"><i class="cb"></i><div class="t">Add "&lt;th&gt;" headers to this "&lt;table&gt;".</div><div class="m"><svg width="14" height="14"><use href="#bug"/></svg><a>Bug<u></u></a><svg width="13" height="13"><use href="#maj"/></svg><a>Major<u></u></a><svg width="13" height="13"><use href="#open"/></svg><a>Open<u></u></a><a>Not assigned<u></u></a><span>2min effort</span><a>Comment</a></div><div class="r1"><a>Why is this an issue?</a><a>1 year ago<u></u></a><span>L25</span><svg class="lk" width="11" height="11"><use href="#lnk"/></svg><span class="fl"><svg width="11" height="11"><use href="#flt"/></svg><u></u></span></div><div class="r2"><svg width="15" height="11"><use href="#tag"/></svg><a>accessibility, wcag2-a<u></u></a></div></div>

<div class="fh"><svg width="12" height="14"><use href="#file"/></svg>src/.../data/view-batch-history/view-batch-history.component.html</div>
<div class="c"><i class="cb"></i><div class="t">Add "&lt;th&gt;" headers to this "&lt;table&gt;".</div><div class="m"><svg width="14" height="14"><use href="#bug"/></svg><a>Bug<u></u></a><svg width="13" height="13"><use href="#maj"/></svg><a>Major<u></u></a><svg width="13" height="13"><use href="#open"/></svg><a>Open<u></u></a><a>Not assigned<u></u></a><span>2min effort</span><a>Comment</a></div><div class="r1"><a>Why is this an issue?</a><a>1 year ago<u></u></a><span>L38</span><svg class="lk" width="11" height="11"><use href="#lnk"/></svg><span class="fl"><svg width="11" height="11"><use href="#flt"/></svg><u></u></span></div><div class="r2"><svg width="15" height="11"><use href="#tag"/></svg><a>accessibility, wcag2-a<u></u></a></div></div>

<div class="fh"><svg width="12" height="14"><use href="#file"/></svg>src/.../datasource/add-edit-columns/add-edit-columns.component.ts</div>
<div class="c"><i class="cb"></i><div class="t">Consider using "forEach" instead of "map" as its return value is not being used here.</div><div class="m"><svg width="14" height="14"><use href="#bug"/></svg><a>Bug<u></u></a><svg width="13" height="13"><use href="#maj"/></svg><a>Major<u></u></a><svg width="13" height="13"><use href="#open"/></svg><a>Open<u></u></a><a>Not assigned<u></u></a><span>5min effort</span><a>Comment</a></div><div class="r1"><a>Why is this an issue?</a><a>19 minutes ago<u></u></a><span>L93</span><svg class="lk" width="11" height="11"><use href="#lnk"/></svg><span class="fl"><svg width="11" height="11"><use href="#flt"/></svg><u></u></span></div><div class="r2"><svg width="15" height="11"><use href="#tag"/></svg><a>No tags<u></u></a></div></div>
<div class="c"><i class="cb"></i><div class="t">Consider using "forEach" instead of "map" as its return value is not being used here.</div><div class="m"><svg width="14" height="14"><use href="#bug"/></svg><a>Bug<u></u></a><svg width="13" height="13"><use href="#maj"/></svg><a>Major<u></u></a><svg width="13" height="13"><use href="#open"/></svg><a>Open<u></u></a><a>Not assigned<u></u></a><span>5min effort</span><a>Comment</a></div><div class="r1"><a>Why is this an issue?</a><a>19 minutes ago<u></u></a><span>L179</span><svg class="lk" width="11" height="11"><use href="#lnk"/></svg><span class="fl"><svg width="11" height="11"><use href="#flt"/></svg><u></u></span></div><div class="r2"><svg width="15" height="11"><use href="#tag"/></svg><a>No tags<u></u></a></div></div>
<div class="c"><i class="cb"></i><div class="t">This conditional operation returns the same value whether the condition is "true" or "false".</div><div class="m"><svg width="14" height="14"><use href="#bug"/></svg><a>Bug<u></u></a><svg width="13" height="13"><use href="#maj"/></svg><a>Major<u></u></a><svg width="13" height="13"><use href="#open"/></svg><a>Open<u></u></a><a>Not assigned<u></u></a><span>15min effort</span><a>Comment</a></div><div class="r1"><a>Why is this an issue?</a><a>19 minutes ago<u></u></a><span>L232</span><svg class="lk" width="11" height="11"><use href="#lnk"/></svg><span class="fl"><svg width="11" height="11"><use href="#flt"/></svg><u></u></span></div><div class="r2"><svg width="15" height="11"><use href="#tag"/></svg><a>No tags<u></u></a></div></div>
<div class="c"><i class="cb"></i><div class="t">Consider using "forEach" instead of "map" as its return value is not being used here.</div><div class="m"><svg width="14" height="14"><use href="#bug"/></svg><a>Bug<u></u></a><svg width="13" height="13"><use href="#maj"/></svg><a>Major<u></u></a><svg width="13" height="13"><use href="#open"/></svg><a>Open<u></u></a><a>Not assigned<u></u></a><span>5min effort</span><a>Comment</a></div><div class="r1"><a>Why is this an issue?</a><a>19 minutes ago<u></u></a><span>L295</span><svg class="lk" width="11" height="11"><use href="#lnk"/></svg><span class="fl"><svg width="11" height="11"><use href="#flt"/></svg><u></u></span></div><div class="r2"><svg width="15" height="11"><use href="#tag"/></svg><a>No tags<u></u></a></div></div>
<div class="c"><i class="cb"></i><div class="t">Consider using "forEach" instead of "map" as its return value is not being used here.</div><div class="m"><svg width="14" height="14"><use href="#bug"/></svg><a>Bug<u></u></a><svg width="13" height="13"><use href="#maj"/></svg><a>Major<u></u></a><svg width="13" height="13"><use href="#open"/></svg><a>Open<u></u></a><a>Not assigned<u></u></a><span>5min effort</span><a>Comment</a></div><div class="r1"><a>Why is this an issue?</a><a>19 minutes ago<u></u></a><span>L315</span><svg class="lk" width="11" height="11"><use href="#lnk"/></svg><span class="fl"><svg width="11" height="11"><use href="#flt"/></svg><u></u></span></div><div class="r2"><svg width="15" height="11"><use href="#tag"/></svg><a>No tags<u></u></a></div></div>
<div class="c"><i class="cb"></i><div class="t">Consider using "forEach" instead of "map" as its return value is not being used here.</div><div class="m"><svg width="14" height="14"><use href="#bug"/></svg><a>Bug<u></u></a><svg width="13" height="13"><use href="#maj"/></svg><a>Major<u></u></a><svg width="13" height="13"><use href="#open"/></svg><a>Open<u></u></a><a>Not assigned<u></u></a><span>5min effort</span><a>Comment</a></div><div class="r1"><a>Why is this an issue?</a><a>19 minutes ago<u></u></a><span>L398</span><svg class="lk" width="11" height="11"><use href="#lnk"/></svg><span class="fl"><svg width="11" height="11"><use href="#flt"/></svg><u></u></span></div><div class="r2"><svg width="15" height="11"><use href="#tag"/></svg><a>No tags<u></u></a></div></div>

<div class="fh"><svg width="12" height="14"><use href="#file"/></svg>src/.../Modules/output-data-management/output-data-management.component.html</div>
<div class="c"><i class="cb"></i><div class="t">Add "&lt;th&gt;" headers to this "&lt;table&gt;".</div><div class="m"><svg width="14" height="14"><use href="#bug"/></svg><a>Bug<u></u></a><svg width="13" height="13"><use href="#maj"/></svg><a>Major<u></u></a><svg width="13" height="13"><use href="#open"/></svg><a>Open<u></u></a><a>Not assigned<u></u></a><span>2min effort</span><a>Comment</a></div><div class="r1"><a>Why is this an issue?</a><a>4 months ago<u></u></a><span>L61</span><svg class="lk" width="11" height="11"><use href="#lnk"/></svg><span class="fl"><svg width="11" height="11"><use href="#flt"/></svg><u></u></span></div><div class="r2"><svg width="15" height="11"><use href="#tag"/></svg><a>accessibility, wcag2-a<u></u></a></div></div>

<div class="fh"><svg width="12" height="14"><use href="#file"/></svg>src/app/Modules/pms-logger/pms-logger.component.html</div>
<div class="c"><i class="cb"></i><div class="t">Add "&lt;th&gt;" headers to this "&lt;table&gt;".</div><div class="m"><svg width="14" height="14"><use href="#bug"/></svg><a>Bug<u></u></a><svg width="13" height="13"><use href="#maj"/></svg><a>Major<u></u></a><svg width="13" height="13"><use href="#open"/></svg><a>Open<u></u></a><a>Not assigned<u></u></a><span>2min effort</span><a>Comment</a></div><div class="r1"><a>Why is this an issue?</a><a>1 year ago<u></u></a><span>L57</span><svg class="lk" width="11" height="11"><use href="#lnk"/></svg><span class="fl"><svg width="11" height="11"><use href="#flt"/></svg><u></u></span></div><div class="r2"><svg width="15" height="11"><use href="#tag"/></svg><a>accessibility, wcag2-a<u></u></a></div></div>

<div class="fh"><svg width="12" height="14"><use href="#file"/></svg>src/.../transaction-data-management/transaction-data-management.component.html</div>
<div class="c"><i class="cb"></i><div class="t">Add "&lt;th&gt;" headers to this "&lt;table&gt;".</div><div class="m"><svg width="14" height="14"><use href="#bug"/></svg><a>Bug<u></u></a><svg width="13" height="13"><use href="#maj"/></svg><a>Major<u></u></a><svg width="13" height="13"><use href="#open"/></svg><a>Open<u></u></a><a>Not assigned<u></u></a><span>2min effort</span><a>Comment</a></div><div class="r1"><a>Why is this an issue?</a><a>4 months ago<u></u></a><span>L54</span><svg class="lk" width="11" height="11"><use href="#lnk"/></svg><span class="fl"><svg width="11" height="11"><use href="#flt"/></svg><u></u></span></div><div class="r2"><svg width="15" height="11"><use href="#tag"/></svg><a>accessibility, wcag2-a<u></u></a></div></div>

<div class="fh"><svg width="12" height="14"><use href="#file"/></svg>src/.../Modules/user-management/roles/roles.component.html</div>
<div class="c"><i class="cb"></i><div class="t">Add "&lt;th&gt;" headers to this "&lt;table&gt;".</div><div class="m"><svg width="14" height="14"><use href="#bug"/></svg><a>Bug<u></u></a><svg width="13" height="13"><use href="#maj"/></svg><a>Major<u></u></a><svg width="13" height="13"><use href="#open"/></svg><a>Open<u></u></a><a>Not assigned<u></u></a><span>2min effort</span><a>Comment</a></div><div class="r1"><a>Why is this an issue?</a><a>1 year ago<u></u></a><span>L39</span><svg class="lk" width="11" height="11"><use href="#lnk"/></svg><span class="fl"><svg width="11" height="11"><use href="#flt"/></svg><u></u></span></div><div class="r2"><svg width="15" height="11"><use href="#tag"/></svg><a>accessibility, wcag2-a<u></u></a></div></div>

<div class="fh"><svg width="12" height="14"><use href="#file"/></svg>src/.../users/viiew-users/viiew-users.component.ts</div>
<div class="c"><i class="cb"></i><div class="t">Introduce a new variable or use its initial value before reassigning "obj".</div><div class="m"><svg width="14" height="14"><use href="#bug"/></svg><a>Bug<u></u></a><svg width="13" height="13"><use href="#min"/></svg><a>Minor<u></u></a><svg width="13" height="13"><use href="#open"/></svg><a>Open<u></u></a><a>Not assigned<u></u></a><span>5min effort</span><a>Comment</a></div><div class="r1"><a>Why is this an issue?</a><a>3 months ago<u></u></a><span>L306</span><svg class="lk" width="11" height="11"><use href="#lnk"/></svg><span class="fl"><svg width="11" height="11"><use href="#flt"/></svg><u></u></span></div><div class="r2"><svg width="15" height="11"><use href="#tag"/></svg><a>No tags<u></u></a></div></div>

<div class="fh"><svg width="12" height="14"><use href="#file"/></svg>src/app/shared/header/header.component.ts</div>
<div class="c"><i class="cb"></i><div class="t">Remove this conditional structure or edit its code blocks so that they're not all the same.</div><div class="m"><svg width="14" height="14"><use href="#bug"/></svg><a>Bug<u></u></a><svg width="13" height="13"><use href="#maj"/></svg><a>Major<u></u></a><svg width="13" height="13"><use href="#open"/></svg><a>Open<u></u></a><a>Not assigned<u></u></a><span>15min effort</span><a>Comment</a></div><div class="r1"><a>Why is this an issue?</a><a>1 month ago<u></u></a><span>L43</span><svg class="lk" width="11" height="11"><use href="#lnk"/></svg><span class="fl"><svg width="11" height="11"><use href="#flt"/></svg><u></u></span></div><div class="r2"><svg width="15" height="11"><use href="#tag"/></svg><a>No tags<u></u></a></div></div>

<div class="fh"><svg width="12" height="14"><use href="#file"/></svg>src/.../except-booster-docker/except-booster-docker.component.ts</div>
<div class="c"><i class="cb"></i><div class="t">Expected an assignment or function call and instead saw an expression.</div><div class="m"><svg width="14" height="14"><use href="#bug"/></svg><a>Bug<u></u></a><svg width="13" height="13"><use href="#maj"/></svg><a>Major<u></u></a><svg width="13" height="13"><use href="#open"/></svg><a>Open<u></u></a><a>Not assigned<u></u></a><span>10min effort</span><a>Comment</a></div><div class="r1"><a>Why is this an issue?</a><a>1 month ago<u></u></a><span>L46</span><svg class="lk" width="11" height="11"><use href="#lnk"/></svg><span class="fl"><svg width="11" height="11"><use href="#flt"/></svg><u></u></span></div><div class="r2"><svg width="15" height="11"><use href="#tag"/></svg><a>cwe, unused<u></u></a></div></div>

<div class="fh"><svg width="12" height="14"><use href="#file"/></svg>src/assets/SCSS/base/_reset.scss</div>
<div class="c"><i class="cb"></i><div class="t">Unexpected missing generic font family</div><div class="m"><svg width="14" height="14"><use href="#bug"/></svg><a>Bug<u></u></a><svg width="13" height="13"><use href="#maj"/></svg><a>Major<u></u></a><svg width="13" height="13"><use href="#open"/></svg><a>Open<u></u></a><a>Not assigned<u></u></a><span>1min effort</span><a>Comment</a></div><div class="r1"><a>Why is this an issue?</a><a>1 year ago<u></u></a><span>L2</span><svg class="lk" width="11" height="11"><use href="#lnk"/></svg><span class="fl"><svg width="11" height="11"><use href="#flt"/></svg><u></u></span></div><div class="r2"><svg width="15" height="11"><use href="#tag"/></svg><a>No tags<u></u></a></div></div>
<div class="c"><i class="cb"></i><div class="t">Unexpected missing generic font family</div><div class="m"><svg width="14" height="14"><use href="#bug"/></svg><a>Bug<u></u></a><svg width="13" height="13"><use href="#maj"/></svg><a>Major<u></u></a><svg width="13" height="13"><use href="#open"/></svg><a>Open<u></u></a><a>Not assigned<u></u></a><span>1min effort</span><a>Comment</a></div><div class="r1"><a>Why is this an issue?</a><a>1 year ago<u></u></a><span>L10</span><svg class="lk" width="11" height="11"><use href="#lnk"/></svg><span class="fl"><svg width="11" height="11"><use href="#flt"/></svg><u></u></span></div><div class="r2"><svg width="15" height="11"><use href="#tag"/></svg><a>No tags<u></u></a></div></div>

<div class="fh"><svg width="12" height="14"><use href="#file"/></svg>src/assets/SCSS/base/_typography.scss</div>
<div class="c"><i class="cb"></i><div class="t">Unexpected missing generic font family</div><div class="m"><svg width="14" height="14"><use href="#bug"/></svg><a>Bug<u></u></a><svg width="13" height="13"><use href="#maj"/></svg><a>Major<u></u></a><svg width="13" height="13"><use href="#open"/></svg><a>Open<u></u></a><a>Not assigned<u></u></a><span>1min effort</span><a>Comment</a></div><div class="r1"><a>Why is this an issue?</a><a>1 year ago<u></u></a><span>L46</span><svg class="lk" width="11" height="11"><use href="#lnk"/></svg><span class="fl"><svg width="11" height="11"><use href="#flt"/></svg><u></u></span></div><div class="r2"><svg width="15" height="11"><use href="#tag"/></svg><a>No tags<u></u></a></div></div>

<div class="fh"><svg width="12" height="14"><use href="#file"/></svg>src/assets/SCSS/components/_chips.scss</div>
<div class="c"><i class="cb"></i><div class="t">Unexpected unknown type selector "tag"</div><div class="m"><svg width="14" height="14"><use href="#bug"/></svg><a>Bug<u></u></a><svg width="13" height="13"><use href="#crit"/></svg><a>Critical<u></u></a><svg width="13" height="13"><use href="#open"/></svg><a>Open<u></u></a><a>Not assigned<u></u></a><span>5min effort</span><a>Comment</a></div><div class="r1"><a>Why is this an issue?</a><a>1 year ago<u></u></a><span>L82</span><svg class="lk" width="11" height="11"><use href="#lnk"/></svg><span class="fl"><svg width="11" height="11"><use href="#flt"/></svg><u></u></span></div><div class="r2"><svg width="15" height="11"><use href="#tag"/></svg><a>No tags<u></u></a></div></div>

<div class="fh"><svg width="12" height="14"><use href="#file"/></svg>src/assets/SCSS/layout/_miscellaneous.scss</div>
<div class="c"><i class="cb"></i><div class="t">Unexpected duplicate "border"</div><div class="m"><svg width="14" height="14"><use href="#bug"/></svg><a>Bug<u></u></a><svg width="13" height="13"><use href="#maj"/></svg><a>Major<u></u></a><svg width="13" height="13"><use href="#open"/></svg><a>Open<u></u></a><a>Not assigned<u></u></a><span>1min effort</span><a>Comment</a></div><div class="r1"><a>Why is this an issue?</a><a>1 year ago<u></u></a><span>L1667</span><svg class="lk" width="11" height="11"><use href="#lnk"/></svg><span class="fl"><svg width="11" height="11"><use href="#flt"/></svg><u></u></span></div><div class="r2"><svg width="15" height="11"><use href="#tag"/></svg><a>No tags<u></u></a></div></div>
<div class="c"><i class="cb"></i><div class="t">Unexpected duplicate "color"</div><div class="m"><svg width="14" height="14"><use href="#bug"/></svg><a>Bug<u></u></a><svg width="13" height="13"><use href="#maj"/></svg><a>Major<u></u></a><svg width="13" height="13"><use href="#open"/></svg><a>Open<u></u></a><a>Not assigned<u></u></a><span>1min effort</span><a>Comment</a></div><div class="r1"><a>Why is this an issue?</a><a>1 year ago<u></u></a><span>L3572</span><svg class="lk" width="11" height="11"><use href="#lnk"/></svg><span class="fl"><svg width="11" height="11"><use href="#flt"/></svg><u></u></span></div><div class="r2"><svg width="15" height="11"><use href="#tag"/></svg><a>No tags<u></u></a></div></div>
</div>

<div class="abs" style="left:300px;width:1000px;top:4019px;text-align:center;color:#777;font-size:12px">42 of 42 shown</div>

<div class="abs" style="left:0;top:4055px;width:1300px;height:1px;background:#e6e6e6"></div>
<div class="abs" style="left:310px;top:4067px;width:978px;height:76px;background:#fcf8e3;border:1px solid #faebcc"></div>
<div class="abs" style="left:343px;top:4068px;width:1px;height:74px;background:#faebcc"></div>
<div class="abs" style="left:320px;top:4098px;width:14px;height:14px;border-radius:7px;background:#ed7d20;color:#fff;font-weight:bold;font-size:11px;text-align:center;line-height:14px">!</div>
<div class="abs" style="left:360px;top:4077px;font-size:16px;color:#6d5723">Embedded database should be used for evaluation purposes only</div>
<div class="abs" style="left:360px;top:4099px;width:920px;font-size:12px;line-height:18px;color:#6d5723">The embedded database will not scale, it will not support upgrading to newer versions of SonarQube, and there is no support for migrating your data out of it into a different database engine.</div>
<div class="abs" style="left:300px;width:1000px;top:4153px;text-align:center;color:#666;font-size:12px">SonarQube™ technology is powered by <span style="border-bottom:1px solid #bbb">SonarSource SA</span></div>
<div class="abs" style="left:300px;width:1000px;top:4171px;text-align:center;color:#666;font-size:12px">Community Edition - Version 9.4 (build 54424) - <span style="border-bottom:1px solid #bbb">LGPL v3</span> - <span style="border-bottom:1px solid #bbb">Community</span> - <span style="border-bottom:1px solid #bbb">Documentation</span> - <span style="border-bottom:1px solid #bbb">Plugins</span> - <span style="border-bottom:1px solid #bbb">Web API</span></div>
</body></html>
